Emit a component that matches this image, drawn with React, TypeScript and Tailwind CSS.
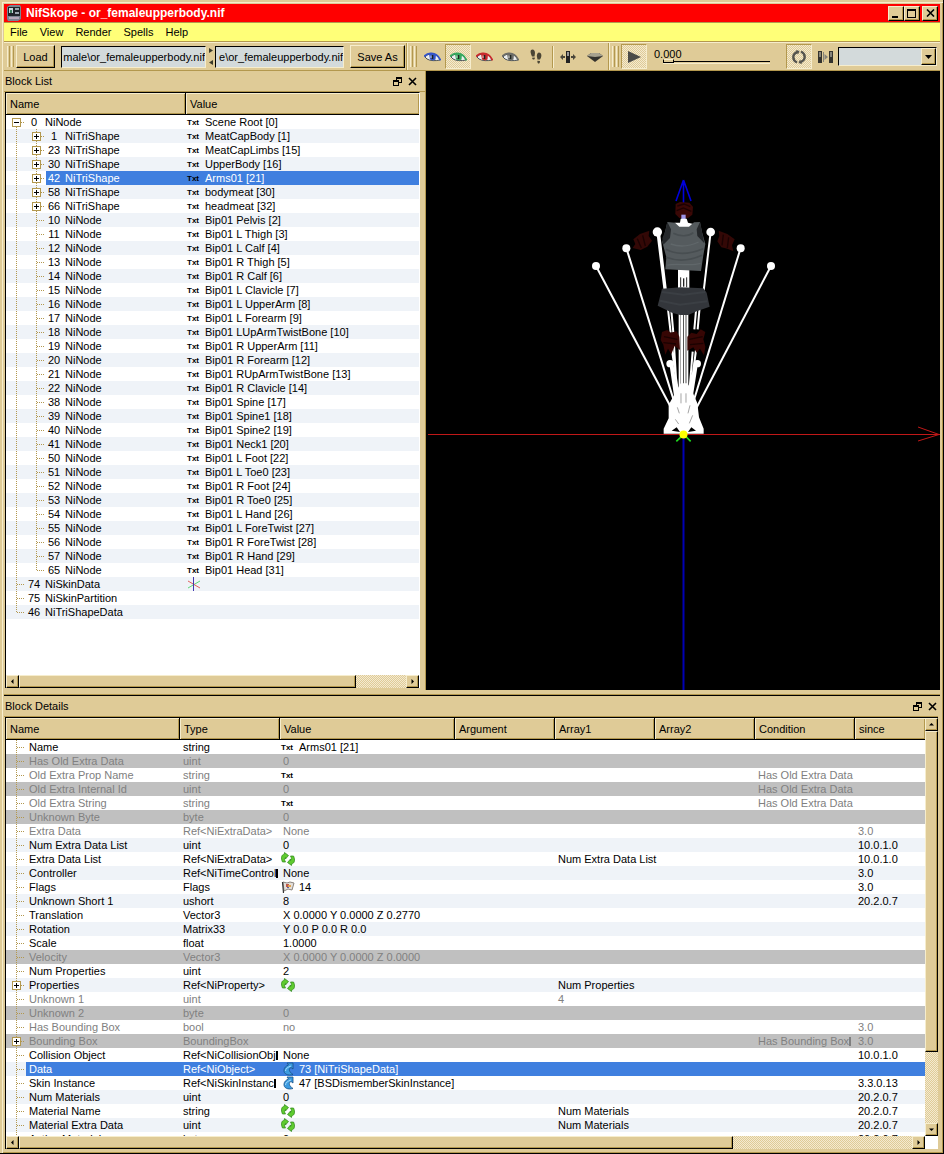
import type { ReactNode } from 'react'

type TreeBlock = { id: number; type: string; value?: string; depth: number; icon?: 'axes'; children?: 'open' | 'closed' }

type DetailRow = {
  name: string
  type: string
  value?: string
  icon?: 'txt' | 'refresh' | 'flag' | 'link'
  array1?: string
  condition?: string
  since?: string
  disabled?: boolean
  expandable?: boolean
  cutType?: boolean
  cutCondition?: boolean
}

const shapes: [number, string][] = [
  [1, 'MeatCapBody [1]'],
  [23, 'MeatCapLimbs [15]'],
  [30, 'UpperBody [16]'],
  [42, 'Arms01 [21]'],
  [58, 'bodymeat [30]'],
  [66, 'headmeat [32]'],
]

const bones: [number, string][] = [
  [10, 'Bip01 Pelvis [2]'],
  [11, 'Bip01 L Thigh [3]'],
  [12, 'Bip01 L Calf [4]'],
  [13, 'Bip01 R Thigh [5]'],
  [14, 'Bip01 R Calf [6]'],
  [15, 'Bip01 L Clavicle [7]'],
  [16, 'Bip01 L UpperArm [8]'],
  [17, 'Bip01 L Forearm [9]'],
  [18, 'Bip01 LUpArmTwistBone [10]'],
  [19, 'Bip01 R UpperArm [11]'],
  [20, 'Bip01 R Forearm [12]'],
  [21, 'Bip01 RUpArmTwistBone [13]'],
  [22, 'Bip01 R Clavicle [14]'],
  [38, 'Bip01 Spine [17]'],
  [39, 'Bip01 Spine1 [18]'],
  [40, 'Bip01 Spine2 [19]'],
  [41, 'Bip01 Neck1 [20]'],
  [50, 'Bip01 L Foot [22]'],
  [51, 'Bip01 L Toe0 [23]'],
  [52, 'Bip01 R Foot [24]'],
  [53, 'Bip01 R Toe0 [25]'],
  [54, 'Bip01 L Hand [26]'],
  [55, 'Bip01 L ForeTwist [27]'],
  [56, 'Bip01 R ForeTwist [28]'],
  [57, 'Bip01 R Hand [29]'],
  [65, 'Bip01 Head [31]'],
]

const blocks: TreeBlock[] = [
  { id: 0, type: 'NiNode', value: 'Scene Root [0]', depth: 0, children: 'open' },
  ...shapes.map(([id, value]): TreeBlock => ({ id, type: 'NiTriShape', value, depth: 1, children: 'closed' })),
  ...bones.map(([id, value]): TreeBlock => ({ id, type: 'NiNode', value, depth: 1 })),
  { id: 74, type: 'NiSkinData', depth: 0, icon: 'axes' },
  { id: 75, type: 'NiSkinPartition', depth: 0 },
  { id: 46, type: 'NiTriShapeData', depth: 0 },
]

const details: DetailRow[] = [
  { name: 'Name', type: 'string', value: 'Arms01 [21]', icon: 'txt' },
  { name: 'Has Old Extra Data', type: 'uint', value: '0', disabled: true },
  { name: 'Old Extra Prop Name', type: 'string', icon: 'txt', condition: 'Has Old Extra Data', disabled: true },
  { name: 'Old Extra Internal Id', type: 'uint', value: '0', condition: 'Has Old Extra Data', disabled: true },
  { name: 'Old Extra String', type: 'string', icon: 'txt', condition: 'Has Old Extra Data', disabled: true },
  { name: 'Unknown Byte', type: 'byte', value: '0', disabled: true },
  { name: 'Extra Data', type: 'Ref<NiExtraData>', value: 'None', since: '3.0', disabled: true },
  { name: 'Num Extra Data List', type: 'uint', value: '0', since: '10.0.1.0' },
  { name: 'Extra Data List', type: 'Ref<NiExtraData>', icon: 'refresh', array1: 'Num Extra Data List', since: '10.0.1.0' },
  { name: 'Controller', type: 'Ref<NiTimeControl', value: 'None', since: '3.0', cutType: true },
  { name: 'Flags', type: 'Flags', value: '14', icon: 'flag', since: '3.0' },
  { name: 'Unknown Short 1', type: 'ushort', value: '8', since: '20.2.0.7' },
  { name: 'Translation', type: 'Vector3', value: 'X 0.0000 Y 0.0000 Z 0.2770' },
  { name: 'Rotation', type: 'Matrix33', value: 'Y 0.0 P 0.0 R 0.0' },
  { name: 'Scale', type: 'float', value: '1.0000' },
  { name: 'Velocity', type: 'Vector3', value: 'X 0.0000 Y 0.0000 Z 0.0000', disabled: true },
  { name: 'Num Properties', type: 'uint', value: '2' },
  { name: 'Properties', type: 'Ref<NiProperty>', icon: 'refresh', array1: 'Num Properties', expandable: true },
  { name: 'Unknown 1', type: 'uint', array1: '4', disabled: true },
  { name: 'Unknown 2', type: 'byte', value: '0', disabled: true },
  { name: 'Has Bounding Box', type: 'bool', value: 'no', since: '3.0', disabled: true },
  { name: 'Bounding Box', type: 'BoundingBox', condition: 'Has Bounding Box', since: '3.0', disabled: true, expandable: true, cutCondition: true },
  { name: 'Collision Object', type: 'Ref<NiCollisionObj', value: 'None', since: '10.0.1.0', cutType: true },
  { name: 'Data', type: 'Ref<NiObject>', value: '73 [NiTriShapeData]', icon: 'link' },
  { name: 'Skin Instance', type: 'Ref<NiSkinInstanc', value: '47 [BSDismemberSkinInstance]', icon: 'link', since: '3.3.0.13', cutType: true },
  { name: 'Num Materials', type: 'uint', value: '0', since: '20.2.0.7' },
  { name: 'Material Name', type: 'string', icon: 'refresh', array1: 'Num Materials', since: '20.2.0.7' },
  { name: 'Material Extra Data', type: 'uint', icon: 'refresh', array1: 'Num Materials', since: '20.2.0.7' },
  { name: 'Active Material', type: 'byte', value: '0', since: '20.2.0.7' },
]

const raised =
  'bg-[#dfcb97] border border-t-[#f6edcd] border-l-[#f6edcd] border-r-black border-b-black shadow-[inset_-1px_-1px_0_#b3984e]'
const sunken = 'border border-t-[#b3984e] border-l-[#b3984e] border-r-[#f6edcd] border-b-[#f6edcd]'
const dither = 'bg-[repeating-conic-gradient(#dfcb97_0_25%,#f4ead0_0_50%)] bg-[length:2px_2px]'

function Branch({ last, box, empty }: { last?: boolean; box?: 'open' | 'closed'; empty?: boolean }) {
  return (
    <svg width="20" height="14" className="shrink-0" shapeRendering="crispEdges" fill="none" stroke="#b3984e">
      {!(box === 'open') && <path d={last ? 'M10.5 0V8' : 'M10.5 0V14'} strokeDasharray="1 1" />}
      {box === 'open' && <path d="M10.5 12V14" strokeDasharray="1 1" />}
      {!empty && <path d="M11 7.5H19" strokeDasharray="1 1" />}
      {box && (
        <>
          <rect x="6.5" y="3.5" width="8" height="8" fill="#fff" />
          <path d={box === 'open' ? 'M8 7.5H13' : 'M8 7.5H13M10.5 5V10'} stroke="#000" />
        </>
      )}
    </svg>
  )
}

function ValueIcon({ kind }: { kind: 'txt' | 'refresh' | 'flag' | 'link' | 'axes' }) {
  if (kind === 'txt') {
    return <span className="w-4 shrink-0 pt-px text-[8px] leading-[14px] font-bold text-black">Txt</span>
  }
  if (kind === 'axes') {
    return (
      <svg width="14" height="14" className="shrink-0" fill="none">
        <path d="M1 11 13 4" stroke="#5fd877" />
        <path d="M1 4 13 11" stroke="#e0605c" />
        <path d="M6.5 0V14" stroke="#4438b0" />
      </svg>
    )
  }
  if (kind === 'refresh') {
    return (
      <svg width="14" height="14" className="shrink-0" fill="#5ecb2f" stroke="#2b8417" strokeWidth=".7">
        <path d="M1.500 10C-.5 6 .5 2.500 3.500 2V.5L7.500 3.500 4.500 7V5.500C3.300 6 3.300 8 4.500 10Z" />
        <path d="M12.500 4C14.500 8 13.500 11.500 10.500 12V13.500L6.500 10.500 9.500 7V8.500C10.700 8 10.700 6 9.500 4Z" />
      </svg>
    )
  }
  if (kind === 'flag') {
    return (
      <svg width="14" height="14" className="shrink-0" fill="none">
        <path d="M2 2 6 3 9 2 13 3 11 10 7 9 3 11Z" fill="#e4dfd9" stroke="#8b8580" />
        <path d="M1.500 2 2.500 13" stroke="#333" strokeWidth="1.200" />
        <path d="M5 4h3v3H5z" fill="#c05a4c" />
        <path d="M7 5h3v2H7z" fill="#e4a44c" />
        <path d="M6 7h2v1H6z" fill="#5b62a0" />
      </svg>
    )
  }
  return (
    <svg width="14" height="14" className="shrink-0">
      <path d="M6 1H12V7L10 5.500C7.500 6.500 7.500 9.500 12 12.500 7 14 2.500 12 3 8 3.300 5.500 5 4 7.500 3Z" fill="#3c9be0" stroke="#174f84" strokeWidth=".8" />
      <path d="M4.500 9C4.500 6.500 7 5 10 4" stroke="#a5dcfa" fill="none" />
    </svg>
  )
}

function DockButtons() {
  return (
    <div className="flex items-center gap-[6px]">
      <button aria-label="Float">
        <svg width="9" height="9" shapeRendering="crispEdges" fill="none" stroke="#000">
          <path d="M3 .5H9M3 1.500H9M3.500 0V3M8.500 0V6M6 5.500H9M0 3.500H6M0 4.500H6M.5 3V9M5.500 3V9M0 8.500H6" />
        </svg>
      </button>
      <button aria-label="Close">
        <svg width="9" height="9" fill="none" stroke="#000" strokeWidth="1.600">
          <path d="M1 1 8 8M8 1 1 8" />
        </svg>
      </button>
    </div>
  )
}

function ScrollButton({ label, d }: { label: string; d: string }) {
  return (
    <button aria-label={label} className={`flex h-[13px] w-[13px] shrink-0 items-center justify-center ${raised}`}>
      <svg width="5" height="5">
        <path d={d} />
      </svg>
    </button>
  )
}

function HorizontalScroll({ thumb }: { thumb: string }) {
  return (
    <div className="flex h-[13px] w-full min-w-0 shrink">
      <ScrollButton label="Scroll left" d="M3.500 0V5L1 2.500Z" />
      <div className={`flex-1 ${dither}`}>
        <div className={`h-full ${thumb} ${raised}`} />
      </div>
      <ScrollButton label="Scroll right" d="M1.500 0V5L4 2.500Z" />
    </div>
  )
}

function HeaderCell({ children, className = '' }: { children: ReactNode; className?: string }) {
  return (
    <th className={`h-[22px] border-b border-black bg-[#dfcb97] p-0 text-left font-normal ${className}`}>
      <div className="flex h-[21px] items-center border-t border-l border-t-[#f6edcd] border-l-[#f6edcd] pl-[3px] shadow-[inset_-1px_-1px_0_#b3984e]">
        {children}
      </div>
    </th>
  )
}

function BlockList() {
  return (
    <section className="flex w-[422px] shrink-0 flex-col border-r border-[#b3984e]">
      <div className="flex h-[21px] shrink-0 items-center justify-between border-b border-[#b3984e] pr-[8px] pl-px">
        <h2>Block List</h2>
        <DockButtons />
      </div>
      <div className="mr-[5px] mb-[2px] ml-px flex min-h-0 flex-1 flex-col border-t border-l border-r border-t-black border-l-black border-r-white bg-white">
        <div className="min-h-0 flex-1 overflow-hidden">
          <table className="w-full table-fixed border-separate border-spacing-0">
            <thead>
              <tr>
                <HeaderCell className="w-[180px] border-r">Name</HeaderCell>
                <HeaderCell>Value</HeaderCell>
              </tr>
            </thead>
            <tbody>
              {blocks.map((block, i) => {
                const selected = block.id === 42
                const last = block.id === 46
                return (
                  <tr key={block.id} className={i % 2 ? 'bg-[#eff3f8]' : 'bg-white'}>
                    <td className="p-0">
                      <div className="flex h-[14px] leading-[14px]">
                        {block.depth === 1 && <Branch empty />}
                        <Branch last={last || block.id === 65} box={block.children} />
                        <div className={`flex flex-1 gap-[3px] ${selected ? 'bg-[#3f7fdf] text-white' : ''}`}>
                          <span className="w-4 text-center">{block.id}</span>
                          <span>{block.type}</span>
                        </div>
                      </div>
                    </td>
                    <td className={`p-0 ${selected ? 'bg-[#3f7fdf] text-white' : ''}`}>
                      <div className="flex h-[14px] gap-[2px] pl-px leading-[14px] whitespace-nowrap">
                        {block.value && <ValueIcon kind="txt" />}
                        {block.icon && <ValueIcon kind={block.icon} />}
                        {block.value}
                      </div>
                    </td>
                  </tr>
                )
              })}
            </tbody>
          </table>
        </div>
        <div className="flex shrink-0">
          <HorizontalScroll thumb="w-[87%]" />
        </div>
      </div>
    </section>
  )
}

function Viewport() {
  return (
    <div className="min-w-0 flex-1 bg-black">
      <svg className="h-full w-full" viewBox="426 71 514 619" fill="none" role="img" aria-label="Render view">
        <path d="M683.500 434V690" stroke="#0000b4" strokeWidth="2" />
        <path d="M683.500 180V207M683.500 180 676 201M683.500 180 691 201" stroke="#0000dc" strokeWidth="1.600" />
        <g transform="translate(580 170) scale(.33333)">
          <path d="M287 102 300 96 328 98 339 110 337 134 324 144H298L286 132Z" fill="#3a0806" />
          <path d="M292 108 312 102 331 110M290 122 310 114 334 124" stroke="#1c0202" strokeWidth="4" />
          <path d="M160 208 180 192 208 182 206 198 216 212 202 230 182 240 158 234 166 222Z" fill="#330806" />
          <path d="M464 208 442 192 416 182 418 198 412 214 424 232 442 236 460 244 456 226Z" fill="#330806" />
          <path d="M172 206 184 234M188 196 196 228M430 194 426 226M446 202 442 234" stroke="#190202" strokeWidth="4" />
          <path d="M304 134H317V148H304Z" fill="#9d94e8" />
          <g stroke="#fff" strokeWidth="6">
            <path d="M48 288 290 745" />
            <path d="M573 288 333 745" />
            <path d="M139 234 298 745" />
            <path d="M482 234 325 745" />
            <path d="M232 186 256 380M237 186 260 380" />
            <path d="M392 186 369 380" />
            <path d="M262 400 272 488M273 410 280 488M360 400 353 478M350 400 343 478M299 430V660M306 430V660M314 430V660M322 430V660" />
            <path d="M276 540 296 680M282 525 292 690M348 540 330 680M338 545 326 690" />
            <path d="M271 580 294 740M277 580 300 740M351 580 326 740M345 580 320 740" />
          </g>
          <path d="M294 298H328V358H294Z" fill="#fff" />
          <path d="M302 322V352M320 322V352" stroke="#222" strokeWidth="3" />
          <path d="M311 325V350" stroke="#222" strokeWidth="4" />
          <g fill="#fff">
            <circle cx="48" cy="288" r="12" />
            <circle cx="573" cy="288" r="12" />
            <circle cx="139" cy="235" r="12" />
            <circle cx="482" cy="235" r="12" />
            <circle cx="232" cy="186" r="14" />
            <circle cx="392" cy="186" r="13" />
            <circle cx="270" cy="581" r="11" />
            <circle cx="352" cy="581" r="11" />
            <path d="M284 158 300 158 302 146H320L324 158 340 162V172H284Z" />
            <path d="M302 640H322L336 662 352 700 357 742 371 776V791H251V776L266 745 266 704 286 668Z" />
          </g>
          <path d="M275 782 290 772 300 786ZM324 786 334 772 348 782Z" fill="#000" />
          <path d="M303 670V700M318 670V698M292 712 298 730M330 706 324 730M286 748 296 762M338 736 328 760" stroke="#777" strokeWidth="2" />
          <path d="M262 156 285 158 298 170H327L342 157 360 156 366 186 376 222 370 256 363 303 256 298 259 262 247 216 256 182Z" fill="#555b5e" />
          <path d="M262 156 273 178 270 204 250 224 247 205 256 182ZM360 156 350 178 352 198 373 220 366 186Z" fill="#25282b" />
          <path d="M258 238C290 256 330 252 370 236M258 262C290 274 330 272 366 256M280 190C300 200 325 200 340 188" stroke="#484e51" strokeWidth="5" />
          <path d="M272 222C300 232 330 228 356 216M262 286C290 278 330 290 362 280" stroke="#60676a" strokeWidth="4" />
          <path d="M246 356 302 352 370 355 380 368 389 410 350 424 325 435H300L276 428 233 407Z" fill="#33363b" />
          <path d="M246 366 310 374 376 366M240 392 300 404 382 394" stroke="#3b3f44" strokeWidth="6" />
          <path d="M246 486 262 480 272 488 290 484 298 500 300 540 284 528 274 552 264 536 256 554 250 524 242 510Z" fill="#360604" />
          <path d="M322 500 334 488 350 492 362 478 376 486 370 508 376 530 372 556 360 536 350 548 340 532 322 542Z" fill="#360604" />
          <path d="M252 500 292 508M250 518 288 522M328 508 368 500M330 524 370 520" stroke="#1a0201" strokeWidth="4" />
          <path d="M289 814 306 798M332 814 316 798" stroke="#1fe01f" strokeWidth="5" />
        </g>
        <path d="M428 434.500H940M918 427 939 434.500 918 441" stroke="#c01818" />
        <circle cx="683.500" cy="434.500" r="4" fill="#ff0" />
      </svg>
    </div>
  )
}

function BlockDetails() {
  return (
    <section className="flex min-h-0 flex-1 flex-col pr-[2px]">
      <div className="flex h-[21px] shrink-0 items-center justify-between border-b border-[#b3984e] pr-px pl-px">
        <h2>Block Details</h2>
        <DockButtons />
      </div>
      <div className="ml-px flex min-h-0 flex-1 flex-col border-t border-l border-black bg-white">
        <div className="flex min-h-0 flex-1">
          <div className="min-w-0 flex-1 overflow-hidden">
            <table className="w-full table-fixed border-separate border-spacing-0">
              <thead>
                <tr>
                  <HeaderCell className="w-[174px] border-r">Name</HeaderCell>
                  <HeaderCell className="w-[100px] border-r">Type</HeaderCell>
                  <HeaderCell className="w-[175px] border-r">Value</HeaderCell>
                  <HeaderCell className="w-[100px] border-r">Argument</HeaderCell>
                  <HeaderCell className="w-[100px] border-r">Array1</HeaderCell>
                  <HeaderCell className="w-[100px] border-r">Array2</HeaderCell>
                  <HeaderCell className="w-[100px] border-r">Condition</HeaderCell>
                  <HeaderCell>since</HeaderCell>
                </tr>
              </thead>
              <tbody className="leading-[14px] whitespace-nowrap">
                {details.map((row, i) => {
                  const selected = row.name === 'Data'
                  const band = i % 2 === 0 ? 'bg-white' : row.disabled ? 'bg-[#c0c0c0]' : 'bg-[#eff3f8]'
                  const cell = selected ? 'p-0 bg-[#3f7fdf] text-white' : 'p-0'
                  return (
                    <tr key={row.name} className={`${band} ${row.disabled ? 'text-[#808080]' : ''}`}>
                      <td className="p-0">
                        <div className="flex h-[14px]">
                          <Branch box={row.expandable ? 'closed' : undefined} />
                          <span className={`flex-1 pl-[3px] ${selected ? 'bg-[#3f7fdf] text-white' : ''}`}>{row.name}</span>
                        </div>
                      </td>
                      <td className={cell}>
                        <div className="flex h-[14px] items-center pl-[3px]">
                          {row.type}
                          {row.cutType && <span className="h-[9px] w-[2px] bg-black" />}
                        </div>
                      </td>
                      <td className={cell}>
                        <div className={`flex h-[14px] gap-[2px] ${row.icon ? 'pl-px' : 'pl-[3px]'}`}>
                          {row.icon && (
                            <span className="flex w-4 shrink-0">
                              <ValueIcon kind={row.icon} />
                            </span>
                          )}
                          {row.value}
                        </div>
                      </td>
                      <td className={cell} />
                      <td className={cell}>
                        <div className="h-[14px] pl-[3px]">{row.array1}</div>
                      </td>
                      <td className={cell} />
                      <td className={cell}>
                        <div className="flex h-[14px] items-center pl-[3px]">
                          {row.condition}
                          {row.cutCondition && <span className="h-[9px] w-[2px] bg-[#808080]" />}
                        </div>
                      </td>
                      <td className={cell}>
                        <div className="h-[14px] pl-[3px]">{row.since}</div>
                      </td>
                    </tr>
                  )
                })}
              </tbody>
            </table>
          </div>
          <div className="flex w-[13px] shrink-0 flex-col">
            <ScrollButton label="Scroll up" d="M0 3.500H5L2.500 1Z" />
            <div className={`flex-1 ${dither}`}>
              <div className={`h-[82%] w-full ${raised}`} />
            </div>
            <ScrollButton label="Scroll down" d="M0 1.500H5L2.500 4Z" />
          </div>
        </div>
        <div className="flex shrink-0">
          <HorizontalScroll thumb="w-4/5" />
          <div className="w-[13px] shrink-0" />
        </div>
      </div>
    </section>
  )
}

function Eye({ label, color, checked }: { label: string; color: string; checked?: boolean }) {
  return (
    <button aria-label={label} className={`flex h-[25px] w-[26px] items-center justify-center ${checked ? `${sunken} ${dither}` : ''}`}>
      <svg width="17" height="10" fill="none">
        <path d="M1 5C4 1.500 9 1 12 3 14 4.500 15 6 16 8 12 9 6 9 3 7Z" fill="#eceff0" stroke="#4c5357" />
        <path d="M0 4.500C4 1 9 .5 12.500 3 14 4 15.500 6 16.500 8.500" stroke={color} strokeWidth="1.800" />
        <path d="M5 2H12L11.500 7.500 9 8.500 6 7.500Z" fill={color} />
        <path d="M8.500 3V7" stroke="#1d2420" strokeWidth="1.600" />
        <path d="M7 3.500V6" stroke="#fff" strokeOpacity=".7" />
      </svg>
    </button>
  )
}

function Grip() {
  return (
    <div className="flex h-[21px] shrink-0 gap-px">
      <div className="w-[3px] border-r border-l border-r-[#b3984e] border-l-[#f6edcd]" />
      <div className="w-[3px] border-r border-l border-r-[#b3984e] border-l-[#f6edcd]" />
    </div>
  )
}

function Divider({ className = 'h-[22px]' }: { className?: string }) {
  return <div className={`w-[2px] shrink-0 border-r border-l border-r-[#f6edcd] border-l-[#b3984e] ${className}`} />
}

function Toolbar() {
  const field = 'border border-t-black border-l-black border-r-[#f6edcd] border-b-[#f6edcd] bg-[#d3dadb] outline-none'
  return (
    <div className="flex h-[29px] shrink-0 items-center border-t border-b border-t-[#f6edcd] border-b-[#b3984e] pl-[3px]">
      <Grip />
      <button className={`ml-[2px] h-[23px] w-[39px] ${raised}`}>Load</button>
      <input aria-label="Load file" className={`ml-[6px] h-[22px] w-[145px] text-right ${field}`} defaultValue="male\or_femaleupperbody.nif" />
      <div className="flex w-[9px] shrink-0 flex-col items-center gap-[7px]">
        <svg width="4" height="5" fill="#3a3a2a">
          <path d="M0 0V5L4 2.500Z" />
        </svg>
        <svg width="4" height="5" fill="#3a3a2a">
          <path d="M4 0V5L0 2.500Z" />
        </svg>
      </div>
      <input aria-label="Save file" className={`h-[22px] w-[129px] text-right ${field}`} defaultValue="e\or_femaleupperbody.nif" />
      <button className={`ml-[6px] h-[23px] w-[55px] ${raised}`}>Save As</button>
      <Divider className="ml-px h-full" />
      <div className="ml-[2px] flex items-center">
        <Grip />
        <div className="ml-[2px] flex">
          <Eye label="View top" color="#3555c8" />
          <Eye label="View front" color="#37a95f" checked />
          <Eye label="View side" color="#c9292c" />
          <Eye label="View user" color="#6d6d68" />
        </div>
        <button aria-label="Walk" className="flex h-[25px] w-[26px] items-center justify-center">
          <svg width="12" height="16" fill="#4b4635">
            <path d="M1 1C3-.5 5 1 5 4L4.500 7.500 2 7.500C1 5 0 3 1 1ZM2 8.800 4.800 8.500C5.200 11 2.500 11.500 2 8.800Z" />
            <path d="M10.500 4C8.500 2.500 7 4 6.800 7L7.500 10.500 10 10.500C11.500 8 12 6 10.500 4ZM7.400 11.800 10 12C10 15.500 7 15.500 7.400 11.800Z" />
          </svg>
        </button>
        <Divider className="ml-[3px] h-[22px]" />
        <button aria-label="Flip" className="flex h-[25px] w-[28px] items-center justify-center">
          <svg width="16" height="14" fill="#4a463a">
            <path d="M0 7 3 4V6H5V8H3V10ZM16 7 13 4V6H11V8H13V10Z" />
            <path d="M6 1H10V13H6Z" fill="#222" />
            <path d="M7 2H9V6H7Z" fill="#999" />
          </svg>
        </button>
        <button aria-label="Perspective" className="flex h-[25px] w-[26px] items-center justify-center">
          <svg width="16" height="12">
            <path d="M0 5 4 2H12L16 5 8 11Z" fill="#34332e" />
            <path d="M0 5 4 2H12L16 5 8 6Z" fill="#a7a28f" />
          </svg>
        </button>
      </div>
      <Divider className="h-full" />
      <div className="ml-[2px] flex min-w-0 flex-1 items-center">
        <Grip />
        <button aria-label="Play" className={`ml-[2px] flex h-[25px] w-[26px] items-center justify-center ${sunken} ${dither}`}>
          <svg width="13" height="12">
            <path d="M0 0 13 6 0 12Z" fill="#4b4b48" />
          </svg>
        </button>
        <div className="ml-[7px] w-[118px]">
          <label htmlFor="time" className="block leading-[10px]">
            0.000
          </label>
          <input
            id="time"
            type="range"
            defaultValue={0}
            className="ml-[9px] block h-[5px] w-[107px] appearance-none border-b border-[#f6edcd] bg-[linear-gradient(#000,#000)] bg-[length:100%_1px] bg-center bg-no-repeat [&::-webkit-slider-thumb]:h-[4px] [&::-webkit-slider-thumb]:w-[11px] [&::-webkit-slider-thumb]:appearance-none [&::-webkit-slider-thumb]:border [&::-webkit-slider-thumb]:border-black [&::-webkit-slider-thumb]:border-t-[#f6edcd] [&::-webkit-slider-thumb]:bg-[#dfcb97]"
          />
        </div>
        <button aria-label="Loop" className={`ml-auto flex h-[25px] w-[26px] items-center justify-center ${sunken} ${dither}`}>
          <svg width="14" height="14" fill="none" stroke="#55544d" strokeWidth="2.400">
            <path d="M5 12.500C0 10 0 4 5.500 2M9 1.500C14 4 14 10 8.500 12" />
            <path d="M4 0 7.500 1 6 4.500ZM10 14 6.500 13 8 9.500Z" fill="#55544d" stroke="none" />
          </svg>
        </button>
        <button aria-label="Switch animation" className="flex h-[25px] w-[26px] items-center justify-center">
          <svg width="15" height="12" fill="#34332e">
            <path d="M0 0H4V12H0ZM11 0H15V12H11Z" />
            <path d="M1 1H3V6H1ZM12 1H14V6H12ZM5 1H6V11H5ZM6.500 3 10 6 6.500 9Z" fill="#87847a" />
          </svg>
        </button>
        <div className="relative mr-[3px] w-[99px]">
          <select aria-label="Animation group" className={`block h-[19px] w-full appearance-none ${field}`} />
          <span className={`pointer-events-none absolute top-px right-px bottom-px flex w-[15px] items-center justify-center ${raised}`}>
            <svg width="7" height="4">
              <path d="M0 0H7L3.500 4Z" />
            </svg>
          </span>
        </div>
      </div>
    </div>
  )
}

function TitleBar() {
  const button = `flex h-[15px] w-4 items-center justify-center ${raised}`
  return (
    <header className="flex h-[19px] shrink-0 items-center border-b border-[#b3984e] bg-[#f00] pr-[2px] pl-[2px]">
      <svg width="16" height="16">
        <path d="M1 2 4 0H14L15 2V14L12 16H2L1 14Z" fill="#7a8590" />
        <path d="M2 2H14V11H2Z" fill="#1e2529" />
        <path d="M3 3H7V8H3Z" fill="#c9d6dc" />
        <path d="M9 3H13V5H9ZM9 7H13V9H9Z" fill="#9aa6ad" />
        <path d="M4 5H6V8H4Z" fill="#3c7d5d" />
        <path d="M3 12H13V14H3Z" fill="#b6aab9" />
      </svg>
      <h1 className="flex-1 pl-[4px] text-[12px] font-bold text-white">NifSkope - or_femaleupperbody.nif</h1>
      <button aria-label="Minimize" className={button}>
        <svg width="10" height="9">
          <path d="M1 7H7V9H1Z" />
        </svg>
      </button>
      <button aria-label="Maximize" className={button}>
        <svg width="10" height="9" fill="none" stroke="#000" shapeRendering="crispEdges">
          <path d="M.5 0V9M8.500 0V9M0 .5H9M0 1.500H9M0 8.500H9" />
        </svg>
      </button>
      <button aria-label="Close" className={`ml-[2px] ${button}`}>
        <svg width="9" height="8" fill="none" stroke="#000" strokeWidth="1.600">
          <path d="M1 .5 8 7.500M8 .5 1 7.500" />
        </svg>
      </button>
    </header>
  )
}

function App() {
  return (
    <div className="flex h-screen flex-col border-r border-b border-black bg-[#dfcb97] pt-[4px] pr-[3px] pb-[4px] pl-[4px] font-['Liberation_Sans',Arial,sans-serif] text-[11px] leading-[14px] text-black shadow-[inset_2px_2px_0_#dfcb97,inset_3px_3px_0_#f6edcd,inset_-1px_-1px_0_#b3984e]">
      <TitleBar />
      <nav className="flex h-[19px] shrink-0 items-center gap-[12px] border-b border-[#b3984e] bg-[#ffff78] pl-[6px]">
        <button>File</button>
        <button>View</button>
        <button>Render</button>
        <button>Spells</button>
        <button>Help</button>
      </nav>
      <Toolbar />
      <main className="flex min-h-0 flex-1 flex-col">
        <div className="flex h-[619px] shrink-0">
          <BlockList />
          <Viewport />
        </div>
        <div className="h-[6px] shrink-0 border-b border-black shadow-[inset_0_-1px_0_#b3984e]" />
        <BlockDetails />
      </main>
    </div>
  )
}

export default App
